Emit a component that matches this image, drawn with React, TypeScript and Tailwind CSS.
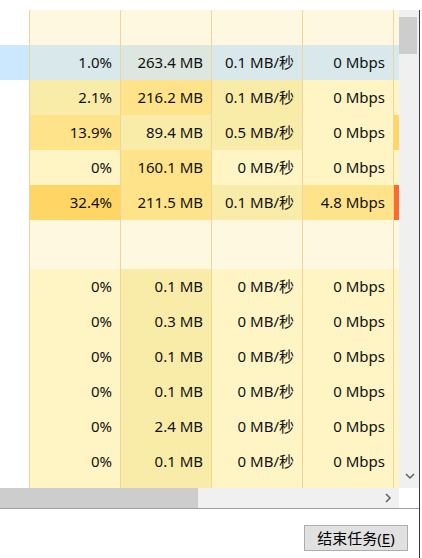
import React from 'react'

type Row = {
  cells: string[]
  colors: string[]
  strip: string
  left?: string
  h?: string
}

const A = 'bg-[#fff4c4]'
const B = 'bg-[#f9eca8]'
const C = 'bg-[#ffe38b]'
const D = 'bg-[#ffd666]'
const H = 'bg-[#fff8e1]'
const S = 'bg-[#d9e9eb]'
const SM = 'bg-[#dde6df]'

const small = (mem: string): Row => ({
  cells: mem ? ['0%', mem, '0 MB/秒', '0 Mbps'] : ['', '', '', ''],
  colors: [A, B, A, A],
  strip: A,
})

const rows: Row[] = [
  { cells: ['', '', '', ''], colors: [H, H, H, H], strip: H },
  {
    cells: ['1.0%', '263.4 MB', '0.1 MB/秒', '0 Mbps'],
    colors: [S, SM, S, S],
    strip: S,
    left: 'bg-[#cce8ff]',
  },
  { cells: ['2.1%', '216.2 MB', '0.1 MB/秒', '0 Mbps'], colors: [B, C, B, A], strip: A },
  { cells: ['13.9%', '89.4 MB', '0.5 MB/秒', '0 Mbps'], colors: [C, B, B, A], strip: D },
  { cells: ['0%', '160.1 MB', '0 MB/秒', '0 Mbps'], colors: [A, C, A, A], strip: A },
  {
    cells: ['32.4%', '211.5 MB', '0.1 MB/秒', '4.8 Mbps'],
    colors: [D, C, B, C],
    strip: 'bg-[#ff6a2b]',
  },
  { cells: ['', '', '', ''], colors: [H, H, H, H], strip: H, h: 'h-[49px]' },
  small('0.1 MB'),
  small('0.3 MB'),
  small('0.1 MB'),
  small('0.1 MB'),
  small('2.4 MB'),
  small('0.1 MB'),
  small(''),
]

function TableRow({ row }: { row: Row }) {
  return (
    <div className={`flex shrink-0 ${row.h ?? 'h-[35px]'}`}>
      <div className={`w-[29px] shrink-0 ${row.left ?? 'bg-white'}`} />
      {row.cells.map((c, i) => (
        <div
          key={i}
          className={`flex w-[91px] shrink-0 items-center justify-end border-l border-[#ecd6a0] pr-[8px] ${row.colors[i]}`}
        >
          {c}
        </div>
      ))}
      <div className={`w-[6px] shrink-0 border-l border-[#ecd6a0] ${row.strip}`} />
    </div>
  )
}

function Chevron({ dir }: { dir: 'down' | 'right' }) {
  return dir === 'down' ? (
    <svg width="10" height="7" viewBox="0 0 10 7">
      <polyline points="1,1 5,5 9,1" fill="none" stroke="#606060" strokeWidth="1.5" />
    </svg>
  ) : (
    <svg width="7" height="10" viewBox="0 0 7 10">
      <polyline points="1,1 5,5 1,9" fill="none" stroke="#606060" strokeWidth="1.5" />
    </svg>
  )
}

export default function App() {
  return (
    <div
      className="flex h-[558px] w-[422px] flex-col overflow-hidden bg-white text-[15px] text-[#111]"
      style={{ fontFamily: '"Noto Sans", "Noto Sans CJK SC", sans-serif' }}
    >
      <div className="h-[10px] shrink-0" />
      <div className="flex h-[498px] shrink-0">
        <div className="flex w-[419px] shrink-0 flex-col">
          <div className="flex h-[478px] shrink-0">
            <div className="flex w-[399px] shrink-0 flex-col overflow-hidden">
              {rows.map((r, i) => (
                <TableRow key={i} row={r} />
              ))}
            </div>
            <div className="flex w-[20px] shrink-0 flex-col justify-between bg-[#f0f0f0] pt-[7px] pb-[8px]">
              <div className="h-[37px] w-[18px] bg-[#cdcdcd]" />
              <div className="flex justify-center pl-[1px]">
                <Chevron dir="down" />
              </div>
            </div>
          </div>
          <div className="flex h-[20px] shrink-0">
            <div className="flex w-[399px] shrink-0 items-center bg-[#f0f0f0]">
              <div className="h-full w-[198px] bg-[#cdcdcd]" />
              <div className="flex-1" />
              <div className="mr-[7px]">
                <Chevron dir="right" />
              </div>
            </div>
            <div className="w-[20px] shrink-0 bg-white" />
          </div>
        </div>
        <div className="w-[1px] shrink-0 bg-[#3c3c3c]" />
      </div>
      <div className="flex flex-1">
        <div className="flex w-[419px] shrink-0 flex-col border-t border-[#a0a0a0]">
          <div className="flex justify-end pt-[16px] pr-[11px]">
            <button className="flex h-[26px] w-[104px] items-center justify-center border border-[#adadad] bg-[#e1e1e1] text-[15px] text-black">
              结束任务(<span className="underline underline-offset-2">E</span>)
            </button>
          </div>
        </div>
        <div className="w-[1px] shrink-0 bg-[#3c3c3c]" />
      </div>
    </div>
  )
}
